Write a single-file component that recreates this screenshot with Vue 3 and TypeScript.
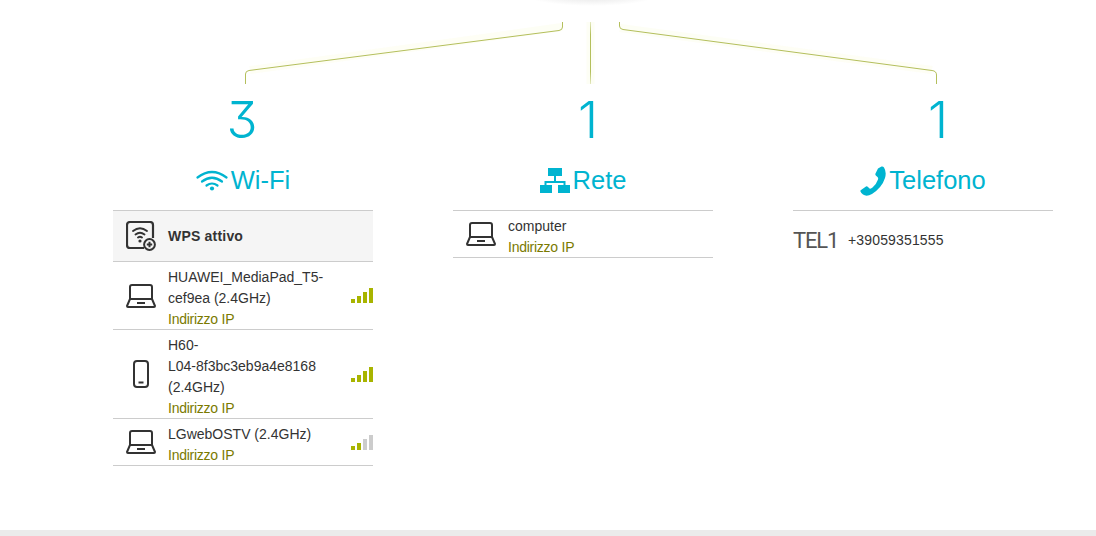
<script setup lang="ts">
interface Device {
  lines: string[]
  icon: 'laptop' | 'phone'
  level: number
}
const wifi: Device[] = [
  { lines: ['HUAWEI_MediaPad_T5-', 'cef9ea (2.4GHz)'], icon: 'laptop', level: 4 },
  { lines: ['H60-', 'L04-8f3bc3eb9a4e8168', '(2.4GHz)'], icon: 'phone', level: 4 },
  { lines: ['LGwebOSTV (2.4GHz)'], icon: 'laptop', level: 2 },
]
const bars = [4, 7, 11, 15]
</script>

<template>
  <div class="page">
    <svg class="links" width="1096" height="96" viewBox="0 0 1096 96" aria-hidden="true">
      <defs>
        <radialGradient id="halo">
          <stop offset="0" stop-color="#cfcfcf" stop-opacity=".7" />
          <stop offset="1" stop-color="#cfcfcf" stop-opacity="0" />
        </radialGradient>
        <linearGradient id="fadeV" gradientUnits="userSpaceOnUse" x1="0" y1="22" x2="0" y2="84">
          <stop offset="0" stop-color="#b4bf5c" stop-opacity=".35" />
          <stop offset=".2" stop-color="#b4bf5c" />
          <stop offset=".8" stop-color="#b4bf5c" />
          <stop offset="1" stop-color="#b4bf5c" stop-opacity=".35" />
        </linearGradient>
      </defs>
      <ellipse cx="592" cy="-7" rx="70" ry="13" fill="url(#halo)" />
      <g fill="none" stroke="#fbfcd8" stroke-width="8" opacity=".25">
        <path d="M562 27 L250 70" />
        <path d="M590.500 22 V84" />
        <path d="M620 28 L932 70" />
      </g>
      <g fill="none" stroke="#b4bf5c" stroke-width="1">
        <path d="M562.500 22 V27 Q562.500 30 559 30.500 L249 70.500 Q245.500 71 245.500 74 V84" />
        <path d="M590.500 22 V84" stroke="url(#fadeV)" />
        <path d="M619.500 22 V26 Q619.500 29 623 29.500 L932 70.500 Q936.500 71 936.500 75 V84" />
      </g>
    </svg>

    <div class="columns">
      <section class="col">
        <div class="count count-wifi">3</div>
        <h2 class="head">
          <svg class="h-icon" width="32" height="21" viewBox="0 0 32 21" aria-hidden="true">
            <g fill="none" stroke="#00b4d0" stroke-width="2.2" stroke-linecap="round">
              <path d="M1.500 7.500 Q16 -3.500 30.500 7.500" />
              <path d="M6 11.500 Q16 4 26 11.500" />
              <path d="M10.500 15.500 Q16 11.500 21.500 15.500" />
            </g>
            <circle cx="16" cy="18.500" r="2.100" fill="#00b4d0" />
          </svg>
          <span>Wi-Fi</span>
        </h2>
        <div class="list">
          <div class="wps">
            <svg class="icon" width="30" height="30" viewBox="0 0 30 30" aria-hidden="true">
              <path d="M18 27 H4 Q1 27 1 24 V4 Q1 1 4 1 H24 Q27 1 27 4 V17" fill="none" stroke="#333" stroke-width="2.200" />
              <g fill="none" stroke="#333" stroke-width="1.900" stroke-linecap="round">
                <path d="M7 10 Q14 4.500 21 10" />
                <path d="M9.500 13.500 Q14 10 18.500 13.500" />
                <path d="M12 16.500 Q14 15 16 16.500" />
              </g>
              <circle cx="14" cy="20" r="1.600" fill="#333" />
              <circle cx="23.500" cy="23.500" r="5.400" fill="none" stroke="#333" stroke-width="2" />
              <path d="M20.800 23.500 H26.200 M23.500 20.800 V26.200" stroke="#333" stroke-width="2" />
            </svg>
            <b>WPS attivo</b>
          </div>
          <div v-for="d in wifi" :key="d.lines[0]" class="row">
            <svg v-if="d.icon === 'laptop'" class="icon" width="30" height="24" viewBox="0 0 30 24" aria-hidden="true">
              <path d="M4 15 V3 Q4 1 6 1 H24 Q26 1 26 3 V15 L29 22 Q29 23 28 23 H2 Q1 23 1 22 Z" fill="none" stroke="#333" stroke-width="2" stroke-linejoin="round" />
              <path d="M4 15 H26" stroke="#333" stroke-width="2" />
              <path d="M11 19 H19" stroke="#333" stroke-width="2" />
            </svg>
            <svg v-else class="icon" width="30" height="28" viewBox="0 0 30 28" aria-hidden="true">
              <rect x="8" y="1" width="14" height="26" rx="3" fill="none" stroke="#333" stroke-width="2" />
              <path d="M12.500 22.500 H17.500" stroke="#333" stroke-width="2" />
            </svg>
            <div class="text">
              <div v-for="l in d.lines" :key="l">{{ l }}</div>
              <div class="ip">Indirizzo IP</div>
            </div>
            <div class="signal">
              <i
                v-for="(h, n) in bars"
                :key="h"
                :class="{ off: n >= d.level }"
                :style="{ height: h + 'px' }"
              />
            </div>
          </div>
        </div>
      </section>

      <section class="col">
        <div class="count count-net">1</div>
        <h2 class="head">
          <svg class="h-icon" width="30" height="25" viewBox="0 0 30 25" aria-hidden="true">
            <path d="M15 8 V14 M5.500 18 V14 H24.500 V18" fill="none" stroke="#00b4d0" stroke-width="2" />
            <rect x="8" y="0" width="14" height="8" fill="#00b4d0" />
            <rect x="0" y="17" width="12" height="8" fill="#00b4d0" />
            <rect x="18" y="17" width="12" height="8" fill="#00b4d0" />
          </svg>
          <span>Rete</span>
        </h2>
        <div class="list">
          <div class="row">
            <svg class="icon" width="30" height="24" viewBox="0 0 30 24" aria-hidden="true">
              <path d="M4 15 V3 Q4 1 6 1 H24 Q26 1 26 3 V15 L29 22 Q29 23 28 23 H2 Q1 23 1 22 Z" fill="none" stroke="#333" stroke-width="2" stroke-linejoin="round" />
              <path d="M4 15 H26" stroke="#333" stroke-width="2" />
              <path d="M11 19 H19" stroke="#333" stroke-width="2" />
            </svg>
            <div class="text">
              <div>computer</div>
              <div class="ip">Indirizzo IP</div>
            </div>
          </div>
        </div>
      </section>

      <section class="col">
        <div class="count count-tel">1</div>
        <h2 class="head">
          <svg class="h-icon" width="26" height="30" viewBox="0 0 26 30" aria-hidden="true">
            <path d="M18 2.500 L21.500 0.500 Q23 0 24 1.500 Q26.800 6 25 12 Q22 21.500 12 28 Q6.500 31 3 28.500 Q1 27 0.500 25.500 Q0 24.500 1 24 L6 20.500 Q7 20 8 21 L9.500 22.500 Q11 23 12.500 21.500 Q16.500 18 18 13.500 Q18.500 12 17.500 11 L15.800 9.500 Q15 8.500 15.500 7.500 Z" fill="#00b4d0" />
          </svg>
          <span>Telefono</span>
        </h2>
        <div class="list tel">
          <span class="tel-name">TEL1</span>
          <span class="tel-num">+39059351555</span>
        </div>
      </section>
    </div>

    <div class="strip" />
  </div>
</template>

<style scoped>
.page {
  height: 536px;
  display: flex;
  flex-direction: column;
  font-family: "Liberation Sans", Arial, sans-serif;
  font-size: 14px;
  line-height: 21px;
  color: #333;
  background: #fff;
  overflow: hidden;
}
.links {
  display: block;
  flex: none;
}
.columns {
  display: flex;
  gap: 80px;
  padding-left: 113px;
  flex: 1;
}
.col {
  width: 260px;
}
.count {
  height: 62px;
  text-align: center;
  font-family: Inter, "Liberation Sans", sans-serif;
  font-feature-settings: "cv09";
  font-weight: 300;
  font-size: 51px;
  line-height: 47px;
  color: #00b4d0;
}
.count-wifi {
  padding-right: 2px;
}
.count-net {
  padding-left: 10px;
}
.count-tel {
  padding-left: 30px;
}
.head {
  margin: 0 0 7px;
  height: 45px;
  display: flex;
  align-items: center;
  justify-content: center;
  gap: 3px;
  font-weight: 400;
  font-size: 25.5px;
  color: #00b4d0;
}
.list {
  border-top: 1px solid #ccc;
}
.wps {
  height: 50px;
  display: flex;
  align-items: center;
  gap: 12px;
  padding-left: 13px;
  background: #f5f5f5;
  border-bottom: 1px solid #ccc;
}
.wps b {
  letter-spacing: 0.2px;
}
.row {
  display: flex;
  align-items: center;
  padding-left: 13px;
  border-bottom: 1px solid #ccc;
}
.icon {
  display: block;
  flex: none;
}
.text {
  margin: 0 0 -1px 12px;
  padding: 5px 0 0;
  flex: 1;
}
.ip {
  letter-spacing: -0.25px;
  color: #7a7a00;
}
.signal {
  display: flex;
  align-items: flex-end;
  gap: 2px;
}
.signal i {
  display: block;
  width: 4px;
  background: #a8b400;
}
.signal i.off {
  background: #ccc;
}
.tel {
  display: flex;
  align-items: center;
  height: 58px;
  gap: 10px;
}
.tel-name {
  font-family: Roboto, "Liberation Sans", sans-serif;
  font-size: 22px;
  letter-spacing: -1.2px;
  color: #555;
}
.tel-num {
  letter-spacing: 0.15px;
}
.strip {
  flex: none;
  height: 6px;
  background: #ebebeb;
}
</style>

<style>
html,
body {
  margin: 0;
  background: #fff;
}
</style>
